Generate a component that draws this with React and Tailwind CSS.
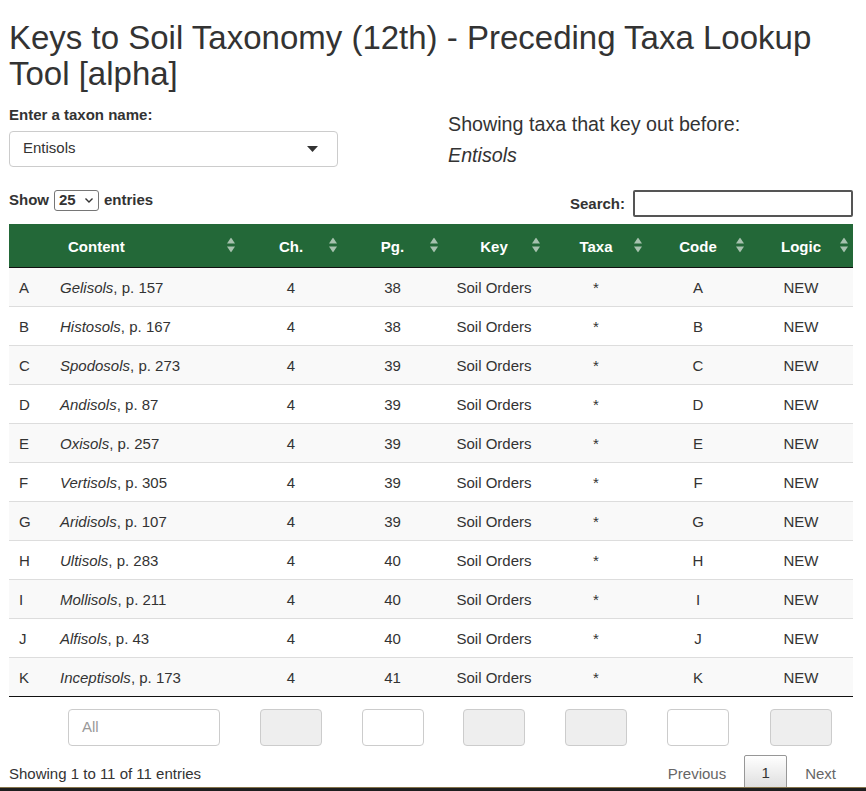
import React from "react";

const rows = [
  ["A", "Gelisols", 157, 4, 38],
  ["B", "Histosols", 167, 4, 38],
  ["C", "Spodosols", 273, 4, 39],
  ["D", "Andisols", 87, 4, 39],
  ["E", "Oxisols", 257, 4, 39],
  ["F", "Vertisols", 305, 4, 39],
  ["G", "Aridisols", 107, 4, 39],
  ["H", "Ultisols", 283, 4, 40],
  ["I", "Mollisols", 211, 4, 40],
  ["J", "Alfisols", 43, 4, 40],
  ["K", "Inceptisols", 173, 4, 41],
];

function SortIcon() {
  return (
    <svg width="8" height="15" viewBox="0 0 8 15" className="absolute right-[5px] top-1/2 -translate-y-1/2 opacity-60">
      <path d="M4 0 L8 6 L0 6 Z" fill="#fff" />
      <path d="M0 9 L8 9 L4 15 Z" fill="#fff" />
    </svg>
  );
}

function Th({ children, left }) {
  return (
    <th
      className={
        "relative h-[44px] pt-[3px] font-bold text-white " +
        (left ? "text-left pl-[18px]" : "text-center")
      }
    >
      {children}
      <SortIcon />
    </th>
  );
}

function FilterBox({ gray, placeholder, wide }) {
  return (
    <div
      className={
        "h-[37px] rounded-[4px] border border-[#ccc] text-[#999] flex items-center pl-[13px] " +
        (gray ? "bg-[#eee] " : "bg-white ") +
        (wide ? "w-[152px] ml-[18px]" : "w-[62px] mx-auto")
      }
    >
      {placeholder}
    </div>
  );
}

export default function App() {
  return (
    <div className="min-h-[791px] bg-white text-[#333] text-[15px] font-['Liberation_Sans',Arial,sans-serif] pl-[9px] pr-[13px]">
      <h1 className="pt-[20px] text-[33px] leading-[1.1] font-normal">
        Keys to Soil Taxonomy (12th) - Preceding Taxa Lookup Tool [alpha]
      </h1>

      <div className="flex mt-[11px]">
        <div className="w-[439px]">
          <div className="font-bold leading-[21px]">Enter a taxon name:</div>
          <div className="mt-[6px] w-[329px] h-[36px] rounded-[4px] border border-[#ccc] flex items-center justify-between pl-[13px] pr-[19px]">
            <span>Entisols</span>
            <svg width="11" height="6" viewBox="0 0 11 6">
              <path d="M0 0 L11 0 L5.5 6 Z" fill="#333" />
            </svg>
          </div>
        </div>
        <div className="pt-[9px] text-[19.7px] leading-[22px]">
          <div>Showing taxa that key out before:</div>
          <div className="mt-[9px] italic">Entisols</div>
        </div>
      </div>

      <div className="flex justify-between items-start mt-[23px] w-[844px]">
        <div className="flex items-center font-bold h-[21px]">
          <span>Show</span>
          <div className="mx-[5px] h-[21px] w-[45px] border border-[#767676] rounded-[3px] flex items-center justify-between pl-[4px] pr-[5px]">
            <span>25</span>
            <svg width="8" height="5" viewBox="0 0 8 5">
              <path d="M0.5 0.5 L4 4 L7.5 0.5" stroke="#333" strokeWidth="1.4" fill="none" />
            </svg>
          </div>
          <span>entries</span>
        </div>
        <div className="flex items-center font-bold">
          <span className="mt-[3px]">Search:</span>
          <div className="ml-[8px] w-[220px] h-[27px] border-2 border-[#555] rounded-[2px] bg-white" />
        </div>
      </div>

      <table className="mt-[7px] w-[844px] table-fixed border-collapse">
        <colgroup>
          <col className="w-[41px]" />
          <col className="w-[190px]" />
          <col className="w-[102px]" />
          <col className="w-[101px]" />
          <col className="w-[102px]" />
          <col className="w-[102px]" />
          <col className="w-[102px]" />
          <col className="w-[104px]" />
        </colgroup>
        <thead>
          <tr className="bg-[#236838] border-b border-[#111]">
            <th className="h-[44px]"></th>
            <Th left>Content</Th>
            <Th>Ch.</Th>
            <Th>Pg.</Th>
            <Th>Key</Th>
            <Th>Taxa</Th>
            <Th>Code</Th>
            <Th>Logic</Th>
          </tr>
        </thead>
        <tbody>
          {rows.map((r, i) => (
            <tr
              key={r[0]}
              className={
                "h-[39px] border-[#ddd] " +
                (i > 0 ? "border-t " : "") +
                (i === rows.length - 1 ? "border-b border-b-[#111] " : "") +
                (i % 2 === 0 ? "bg-[#f9f9f9]" : "bg-white")
              }
            >
              <td className="pl-[10px] pt-[3px]">{r[0]}</td>
              <td className="pl-[10px] pt-[3px]">
                <i>{r[1]}</i>, p. {r[2]}
              </td>
              <td className="text-center pt-[3px]">{r[3]}</td>
              <td className="text-center pt-[3px]">{r[4]}</td>
              <td className="text-center pt-[3px]">Soil Orders</td>
              <td className="text-center pt-[3px]">*</td>
              <td className="text-center pt-[3px]">{r[0]}</td>
              <td className="text-center pt-[3px]">NEW</td>
            </tr>
          ))}
        </tbody>
        <tfoot>
          <tr>
            <td className="pt-[12px]"></td>
            <td className="pt-[12px]">
              <FilterBox wide placeholder="All" />
            </td>
            <td className="pt-[12px]"><FilterBox gray /></td>
            <td className="pt-[12px]"><FilterBox /></td>
            <td className="pt-[12px]"><FilterBox gray /></td>
            <td className="pt-[12px]"><FilterBox gray /></td>
            <td className="pt-[12px]"><FilterBox /></td>
            <td className="pt-[12px]"><FilterBox gray /></td>
          </tr>
        </tfoot>
      </table>

      <div className="mt-[9px] w-[844px] flex justify-between items-center">
        <div className="mt-[2px]">Showing 1 to 11 of 11 entries</div>
        <div className="flex items-center text-[#666]">
          <span className="pl-[19px] pr-[18px] mt-[2px]">Previous</span>
          <span className="h-[36px] w-[43px] border border-[#979797] rounded-[2px] bg-gradient-to-b from-white to-[#dcdcdc] text-[#333] flex items-center justify-center">
            1
          </span>
          <span className="pl-[18px] pr-[17px] mt-[2px]">Next</span>
        </div>
      </div>

      <div className="fixed bottom-0 left-0 right-0 h-[4px] bg-[#1e1e1e] border-t border-[#85744a]" />
    </div>
  );
}
